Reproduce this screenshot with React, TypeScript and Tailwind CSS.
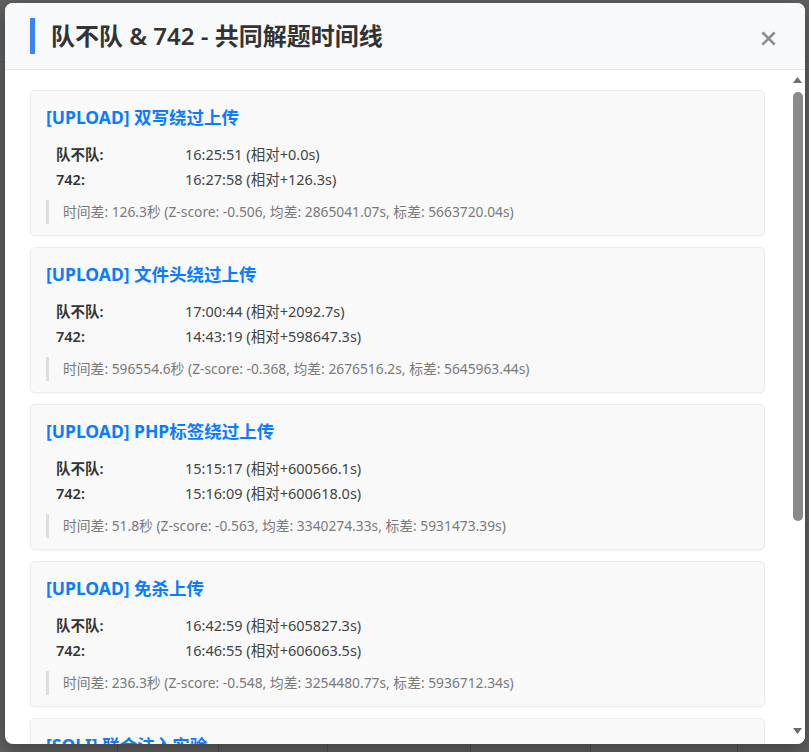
import { X } from "lucide-react";

interface Solve {
  title: string;
  first: string;
  second: string;
  note: string;
}

const teamA = "队不队";
const teamB = "742";

const solves: Solve[] = [
  {
    title: "[UPLOAD] 双写绕过上传",
    first: "16:25:51 (相对+0.0s)",
    second: "16:27:58 (相对+126.3s)",
    note: "时间差: 126.3秒 (Z-score: -0.506, 均差: 2865041.07s, 标差: 5663720.04s)",
  },
  {
    title: "[UPLOAD] 文件头绕过上传",
    first: "17:00:44 (相对+2092.7s)",
    second: "14:43:19 (相对+598647.3s)",
    note: "时间差: 596554.6秒 (Z-score: -0.368, 均差: 2676516.2s, 标差: 5645963.44s)",
  },
  {
    title: "[UPLOAD] PHP标签绕过上传",
    first: "15:15:17 (相对+600566.1s)",
    second: "15:16:09 (相对+600618.0s)",
    note: "时间差: 51.8秒 (Z-score: -0.563, 均差: 3340274.33s, 标差: 5931473.39s)",
  },
  {
    title: "[UPLOAD] 免杀上传",
    first: "16:42:59 (相对+605827.3s)",
    second: "16:46:55 (相对+606063.5s)",
    note: "时间差: 236.3秒 (Z-score: -0.548, 均差: 3254480.77s, 标差: 5936712.34s)",
  },
  {
    title: "[SQLI] 联合注入实验",
    first: "10:12:08 (相对+669140.2s)",
    second: "10:14:31 (相对+669283.6s)",
    note: "时间差: 143.4秒 (Z-score: -0.554, 均差: 3301287.5s, 标差: 5938102.17s)",
  },
  {
    title: "[SQLI] 报错注入实验",
    first: "11:03:47 (相对+672239.8s)",
    second: "11:05:02 (相对+672314.9s)",
    note: "时间差: 75.1秒 (Z-score: -0.565, 均差: 3356940.12s, 标差: 5940055.81s)",
  },
];

function SolveCard({ solve }: { solve: Solve }) {
  return (
    <div className="bg-[#f9f9f9] border border-[#ececec] rounded-[5px] pt-[14px] pb-[11px] px-[15px] mb-[11px] shadow-[0_1px_2px_rgba(0,0,0,0.04)]">
      <div className="text-[17.5px] font-bold text-[#0a7cff] leading-[24px] mb-[13px] whitespace-nowrap">{solve.title}</div>
      <div className="pl-[10px] text-[14.5px] leading-[25px]">
        <div className="flex">
          <span className="w-[129px] shrink-0 font-semibold text-[#333]">{teamA}:</span>
          <span className="text-[#444]">{solve.first}</span>
        </div>
        <div className="flex">
          <span className="w-[129px] shrink-0 font-semibold text-[#333]">{teamB}:</span>
          <span className="text-[#444]">{solve.second}</span>
        </div>
      </div>
      <div className="mt-[8px] border-l-[3px] border-[#dedede] pl-[14px] text-[13.8px] leading-[24px] text-[#7a7a7a] whitespace-nowrap">
        {solve.note}
      </div>
    </div>
  );
}

// drawn scrollbar, the browser hides the native one
function ScrollBar() {
  return (
    <div className="w-[15px] shrink-0 bg-white flex flex-col items-center">
      <svg width="9" height="6" viewBox="0 0 9 6" className="mt-[7px]">
        <path d="M4.5 0 L9 6 L0 6 Z" fill="#6e6e6e" />
      </svg>
      <div className="mt-[9px] w-[10px] h-[429px] rounded-full bg-[#8a8a8a]"></div>
      <div className="flex-1"></div>
      <svg width="9" height="6" viewBox="0 0 9 6" className="mb-[10px]">
        <path d="M0 0 L9 0 L4.5 6 Z" fill="#6e6e6e" />
      </svg>
    </div>
  );
}

export default function App() {
  return (
    <div
      className="relative h-[752px] w-[809px] overflow-hidden bg-[#606060] flex flex-col"
      style={{ fontFamily: '"Noto Sans", "Noto Sans CJK SC", sans-serif' }}
    >
      {/* page behind the overlay */}
      <div className="h-[62px] border-b border-[#565656]"></div>
      <div className="flex-1"></div>
      <div className="flex h-[10px]">
        <div className="w-[118px] border-r border-[#505050]"></div>
        <div className="w-[101px] border-r border-[#505050]"></div>
        <div className="w-[109px] border-r border-[#505050]"></div>
        <div className="w-[143px] border-r border-[#505050]"></div>
        <div className="w-[120px] border-r border-[#505050]"></div>
        <div className="w-[147px] border-r border-[#505050]"></div>
      </div>

      {/* modal */}
      <div className="absolute left-[5px] top-[3px] w-[800px] h-[741px] bg-white rounded-[8px] shadow-[0_6px_20px_rgba(0,0,0,0.35)] flex flex-col overflow-hidden">
        <header className="flex items-center justify-between px-[25px] py-[15px] bg-[#f8f9fa] border-b border-[#e3e6ea]">
          <h3 className="h-[36px] flex items-center border-l-[5px] border-[#3b82f6] pl-[16px] text-[24px] font-semibold text-[#333]">
            {teamA} &amp; {teamB} - 共同解题时间线
          </h3>
          <button className="mr-[1px] mt-[4px] text-[#8c8c8c]">
            <X size={21} strokeWidth={3} strokeLinecap="square" />
          </button>
        </header>
        <div className="flex-1 flex min-h-0">
          <div className="flex-1 overflow-hidden px-[25px] pt-[20px] pb-[8px]">
            {solves.map((s) => (
              <SolveCard key={s.title} solve={s} />
            ))}
          </div>
          <ScrollBar />
        </div>
      </div>
    </div>
  );
}
